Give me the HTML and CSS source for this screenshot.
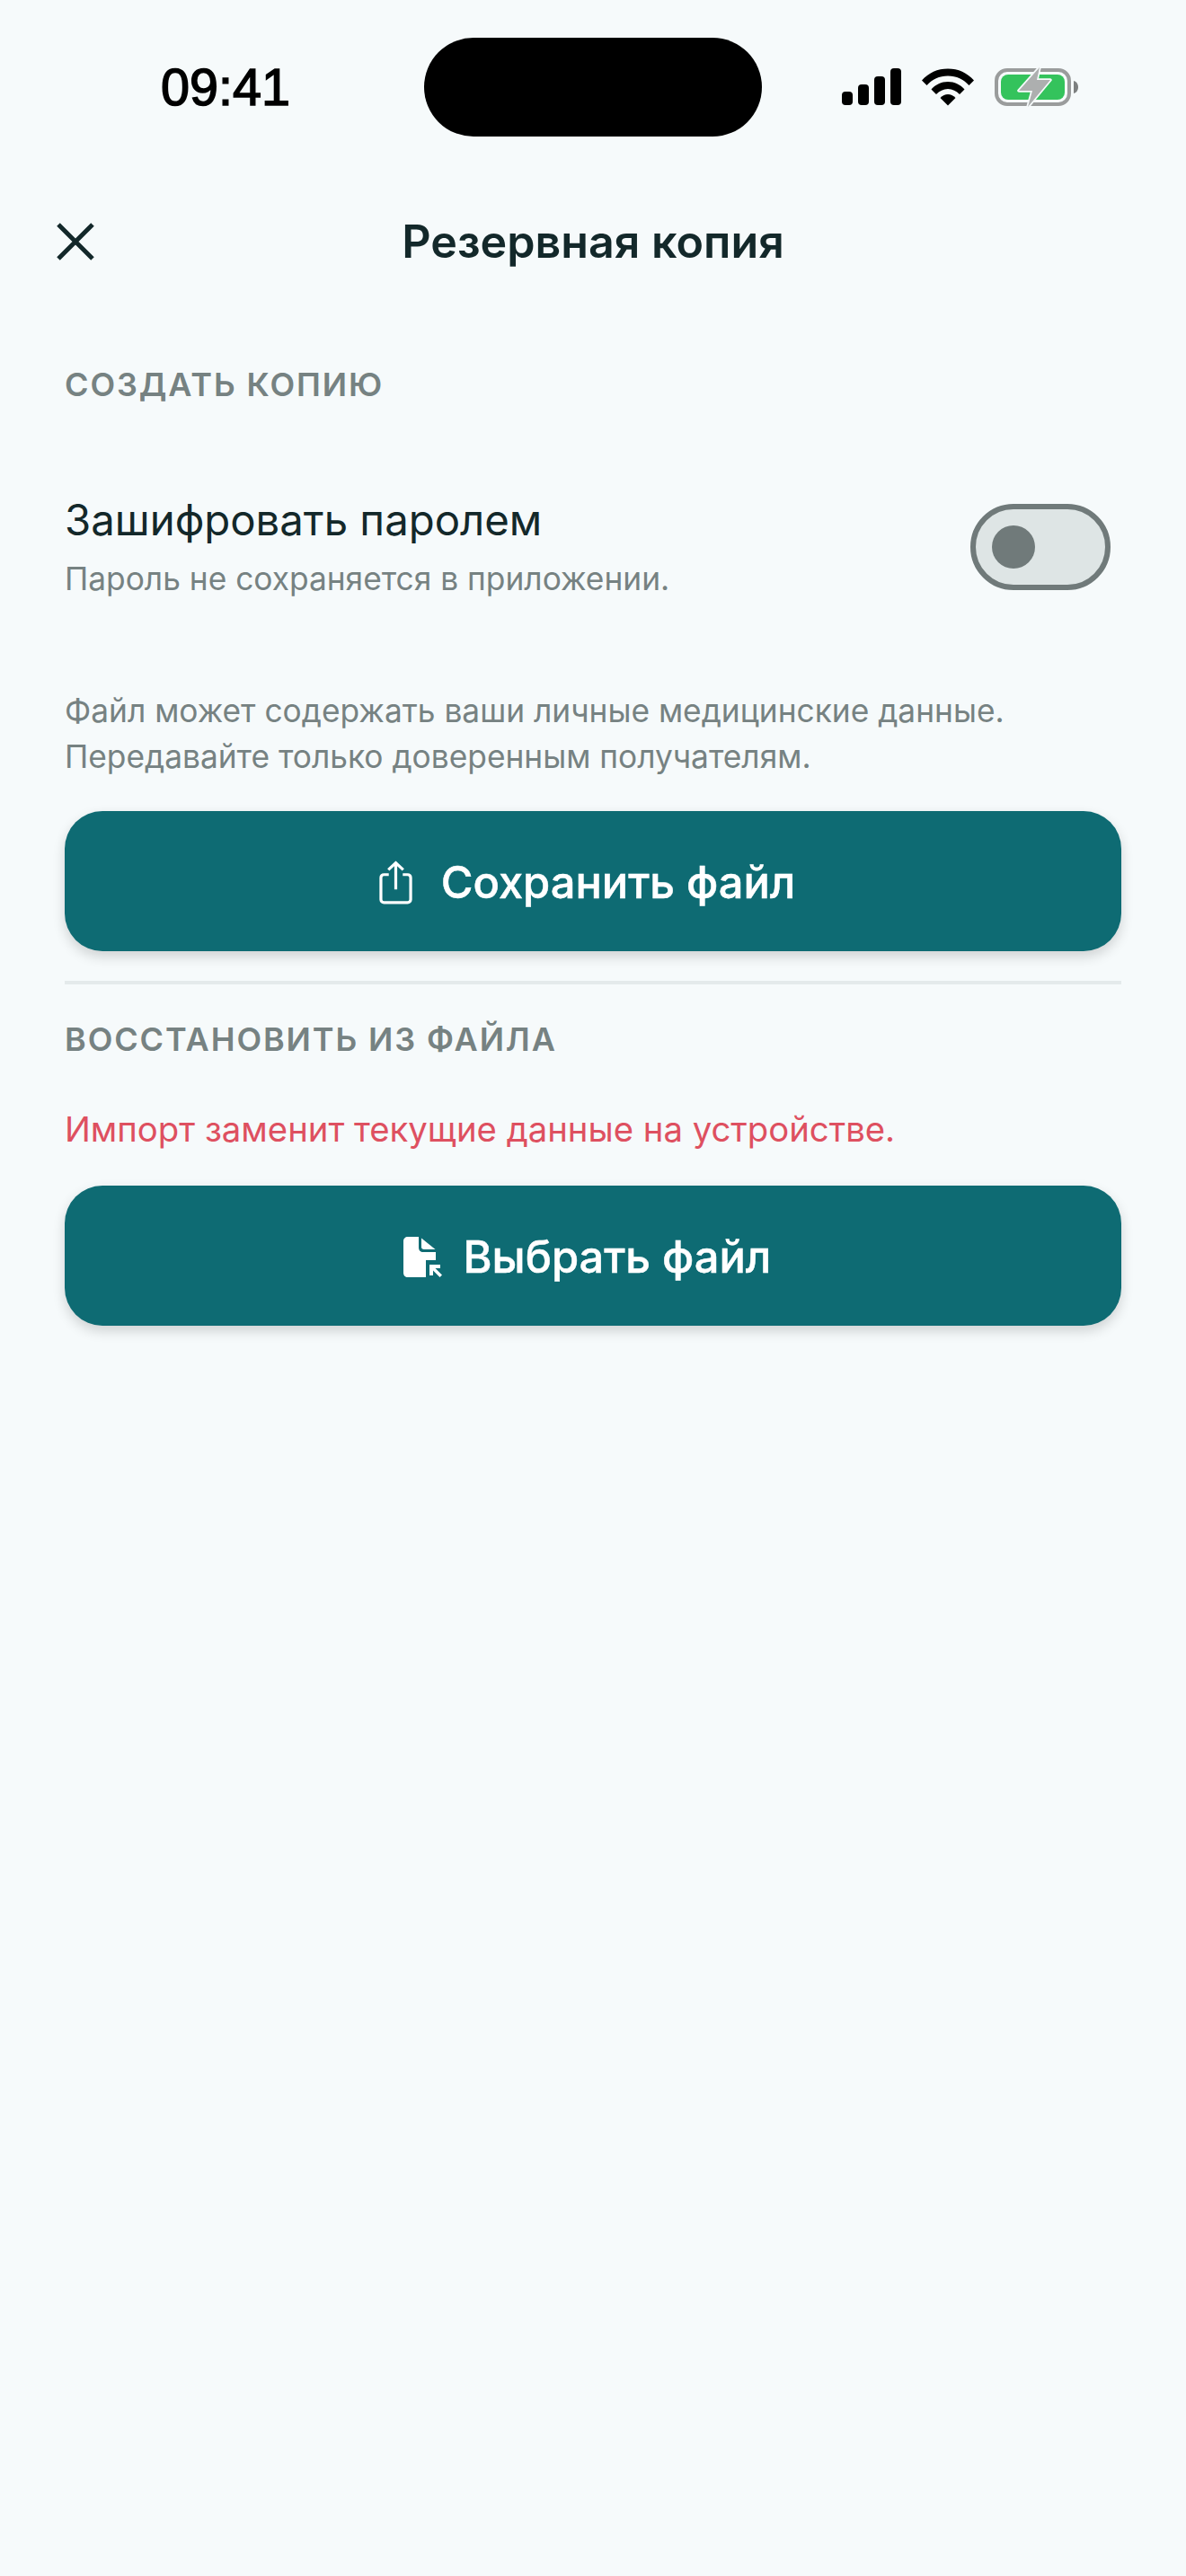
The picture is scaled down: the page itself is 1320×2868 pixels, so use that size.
FILE: index.html
```html
<!DOCTYPE html>
<html lang="ru">
<head>
  <meta charset="UTF-8">
  <meta name="viewport" content="width=device-width, initial-scale=1.0">
  <title>Резервная копия</title>
  <link rel="stylesheet" href="styles.css">
</head>
<body>

<div class="screen">
  <div class="status-bar">
    <span class="time">09:41</span>
    <div class="notch"></div>
    <div class="status-icons">
      <svg class="signal" width="66" height="42" viewBox="0 0 66 42" fill="#000">
        <rect x="0" y="26" width="12" height="15" rx="4"/>
        <rect x="18" y="18" width="12" height="23" rx="4"/>
        <rect x="36" y="9" width="12" height="32" rx="4"/>
        <rect x="54" y="0" width="12" height="41" rx="4"/>
      </svg>
      <svg class="wifi" width="58" height="42" viewBox="0 0 58 42" fill="#000">
        <path d="M0 13.500C7.500 5 17.500 0.500 29 0.500S50.500 5 58 13.500L52.500 19C46.500 12.500 38.500 8.500 29 8.500S11.500 12.500 5.500 19Z"/>
        <path d="M10.500 23.500C15.500 18 21.500 15 29 15S42.500 18 47.500 23.500L42 29C38.500 25.500 34 23 29 23S19.500 25.500 16 29Z"/>
        <path d="M20.500 33C23 30.500 26 29 29 29S35 30.500 37.500 33L29 41.500Z"/>
      </svg>
      <svg class="battery" width="94" height="44" viewBox="0 0 94 44">
        <rect x="2" y="3" width="81" height="38" rx="12" fill="none" stroke="#9a9c9c" stroke-width="4"/>
        <rect x="7" y="8" width="71" height="28" rx="8" fill="#34c35c"/>
        <path d="M88 15C91.500 16 93 19 93 22S91.500 28 88 29Z" fill="#7d8080"/>
        <path d="M50 0L27 26H42L37 44L62 14H47Z" fill="#adafaf" stroke="#f6fafb" stroke-width="3.500" stroke-linejoin="round" paint-order="stroke"/>
      </svg>
    </div>
  </div>

  <header class="top-bar">
    <svg class="close-icon" width="44" height="44" viewBox="0 0 44 44">
      <path d="M3 3L41 41M41 3L3 41" stroke="#13282a" stroke-width="5" fill="none"/>
    </svg>
    <h1>Резервная копия</h1>
  </header>

  <main class="content">
    <h2 class="section-title">СОЗДАТЬ КОПИЮ</h2>

    <div class="toggle-row">
      <div>
        <div class="toggle-label">Зашифровать паролем</div>
        <div class="toggle-hint">Пароль не сохраняется в приложении.</div>
      </div>
      <div class="switch"><div class="switch-knob"></div></div>
    </div>

    <p class="note">Файл может содержать ваши личные медицинские данные.<br>Передавайте только доверенным получателям.</p>

    <button class="btn btn-save" type="button">
      <svg width="37" height="49" viewBox="0 0 38 50" fill="none" stroke="#fff" stroke-width="3.300">
        <path d="M11 16H5.500C3.500 16 2 17.500 2 19.500V44.500C2 46.500 3.500 48 5.500 48H32.500C34.500 48 36 46.500 36 44.500V19.500C36 17.500 34.500 16 32.500 16H27"/>
        <path d="M19 33V3M10.500 10.500L19 2.500L27.500 10.500"/>
      </svg>
      Сохранить файл
    </button>

    <div class="divider"></div>

    <h2 class="section-title section-restore">ВОССТАНОВИТЬ ИЗ ФАЙЛА</h2>
    <p class="warning">Импорт заменит текущие данные на устройстве.</p>

    <button class="btn btn-pick" type="button">
      <svg width="43" height="45" viewBox="0 0 43 45" fill="#fff">
        <path d="M5 0H17V12C17 15 19 17 22 17H36V26H25V45H5C2 45 0 43 0 40V5C0 2 2 0 5 0Z"/>
        <path d="M20 1.500L35.500 14H23C21 14 20 13 20 11.500Z"/>
        <path d="M29 31H41V35H35.500L43 42.500L40.500 45L33 37.500V43H29Z"/>
      </svg>
      Выбрать файл
    </button>
  </main>
</div>

</body>
</html>
```

FILE: styles.css
```css
* {
  box-sizing: border-box;
}
body {
  font-family: Inter, 'Noto Sans', sans-serif;
  margin: 0;
  padding: 0;
  background-color: #f6fafb;
}
.screen {
  width: 1320px;
  height: 2868px;
  overflow: hidden;
}

/* status bar */
.status-bar {
  display: flex;
  align-items: center;
  height: 110px;
  margin-top: 42px;
  padding: 0 48px 0 179px;
}
.time {
  width: 293px;
  font-family: 'Liberation Sans', sans-serif;
  font-size: 57.500px;
  font-weight: 400;
  color: #000;
  -webkit-text-stroke: 1.500px #000;
}
.notch {
  width: 376px;
  height: 110px;
  border-radius: 55px;
  background-color: #000;
}
.status-icons {
  display: flex;
  align-items: center;
  gap: 23px;
  margin-left: 89px;
}

/* top bar */
.top-bar {
  display: flex;
  align-items: center;
  justify-content: center;
  position: relative;
  height: 60px;
  margin-top: 86px;
}
.close-icon {
  position: absolute;
  left: 62px;
  top: 9px;
}
h1 {
  margin: 0;
  font-size: 50.200px;
  font-weight: 600;
  color: #13282a;
}

.content {
  padding: 0 72px;
}
.section-title {
  margin: 0;
  font-size: 36px;
  line-height: 46px;
  font-weight: 600;
  letter-spacing: 1.900px;
  color: #768282;
}
.content > .section-title:first-child {
  margin-top: 107px;
}
.toggle-row {
  display: flex;
  align-items: center;
  justify-content: space-between;
  margin-top: 98px;
  padding-right: 12px;
}
.toggle-label {
  font-size: 47.300px;
  line-height: 60px;
  color: #13282a;
}
.toggle-hint {
  margin-top: 13px;
  font-size: 35.300px;
  line-height: 46px;
  color: #768282;
}
.switch {
  width: 156px;
  height: 96px;
  padding: 0 0 0 18px;
  display: flex;
  align-items: center;
  border: 6px solid #707a7a;
  border-radius: 48px;
  background-color: #dee5e5;
}
.switch-knob {
  width: 48px;
  height: 48px;
  border-radius: 50%;
  background-color: #707a7a;
}
.note {
  margin: 98px 0 35px;
  font-size: 35.300px;
  line-height: 51px;
  color: #768282;
}
.btn {
  display: flex;
  align-items: center;
  justify-content: center;
  width: 100%;
  height: 156px;
  padding: 3px 13px 0 0;
  border: none;
  border-radius: 42px;
  background-color: #0e6b73;
  color: #fff;
  font-family: inherit;
  font-size: 48.800px;
  font-weight: 500;
  -webkit-text-stroke: 0.500px #fff;
  box-shadow: 0 6px 14px rgba(0, 0, 0, 0.16);
}
.btn-save {
  gap: 32px;
}
.btn-pick {
  gap: 24px;
}
.divider {
  height: 4px;
  margin-top: 33px;
  background-color: #e4eaeb;
}
.section-restore {
  margin-top: 38px;
}
.warning {
  margin: 53px 0 39px;
  font-size: 38.300px;
  line-height: 48px;
  color: #de5060;
}
```
